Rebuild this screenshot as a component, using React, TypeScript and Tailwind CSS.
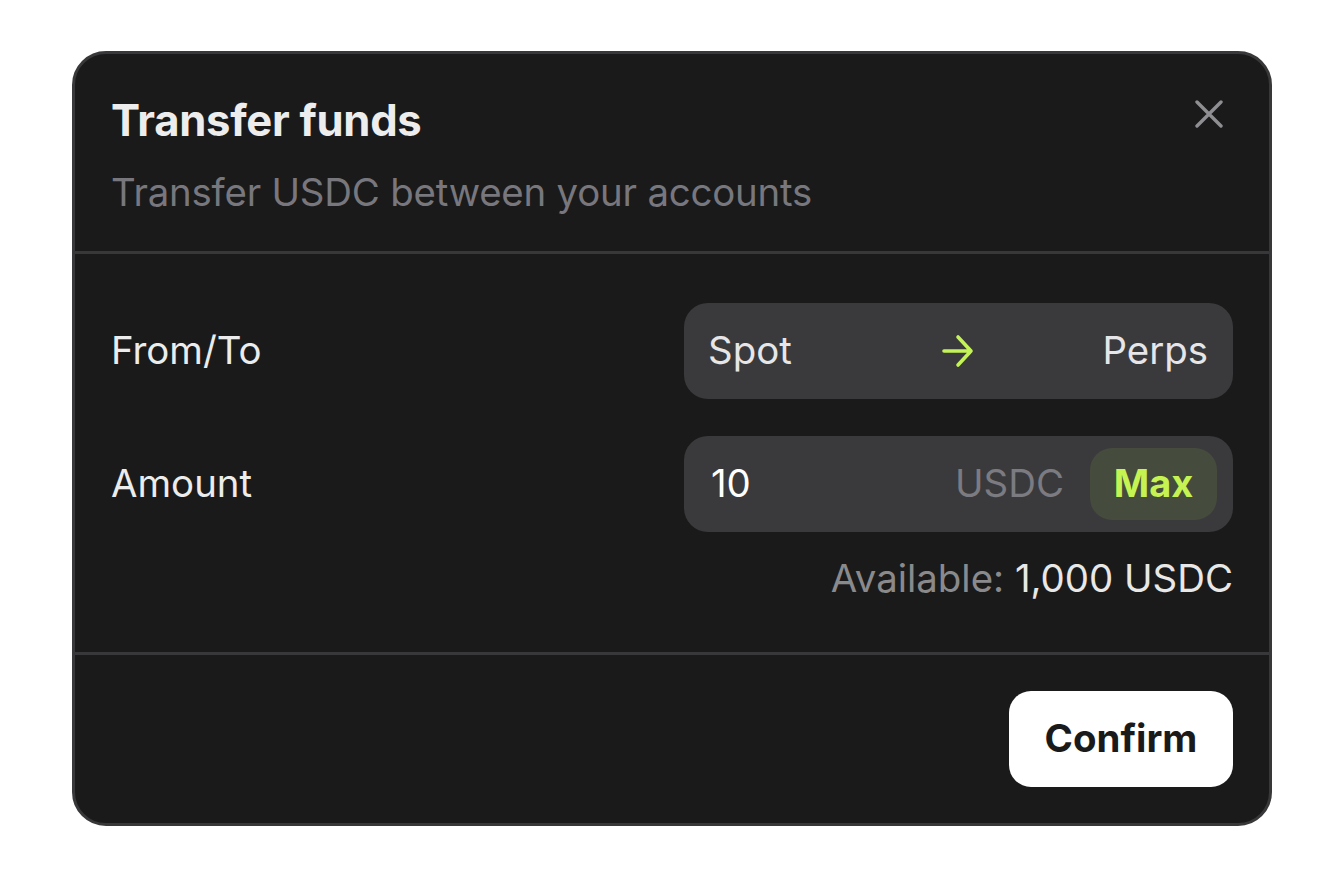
import React from "react";

export default function App() {
  return (
    <div
      className="min-h-screen w-full bg-white flex items-center justify-center"
      style={{ fontFamily: "Inter, 'Noto Sans', sans-serif" }}
    >
      <div className="relative w-[1200px] bg-[#1a1a1a] border-[3px] border-[#38383a] rounded-[34px] overflow-hidden">
        <button className="absolute top-[46px] right-[46px] w-[28px] h-[28px] flex items-center justify-center">
          <svg width="28" height="28" viewBox="0 0 28 28" fill="none">
            <path d="M2 2 L26 26 M26 2 L2 26" stroke="#8e8e93" strokeWidth="3.4" strokeLinecap="round" />
          </svg>
        </button>

        <div className="px-[36px] pt-[38px] pb-[30px] border-b-[3px] border-[#38383a]">
          <h2 className="text-[43.6px] leading-[58px] font-bold text-[#ededed] tracking-[-0.3px]">Transfer funds</h2>
          <p className="mt-[13px] text-[38.4px] leading-[58px] text-[#77777d] tracking-[-0.2px]">Transfer USDC between your accounts</p>
        </div>

        <div className="px-[36px] pt-[49px] pb-[45px] border-b-[3px] border-[#38383a] flex flex-col">
          <div className="flex items-center justify-between">
            <span className="text-[38.4px] text-[#ececec]">From/To</span>
            <div className="w-[549px] h-[96px] rounded-[24px] bg-[#3a3a3c] pl-[24px] pr-[25px] grid grid-cols-3 items-center">
              <span className="justify-self-start text-[38.4px] text-[#e6e6e8]">Spot</span>
              <svg width="34" height="34" viewBox="0 0 34 34" fill="none" className="justify-self-center">
                <path d="M3 17 H30 M17 3 L30 17 L17 31" stroke="#c3f356" strokeWidth="3.6" strokeLinecap="round" strokeLinejoin="round" />
              </svg>
              <span className="justify-self-end text-[38.4px] text-[#e6e6e8]">Perps</span>
            </div>
          </div>

          <div className="mt-[37px] flex items-center justify-between">
            <span className="text-[38.4px] text-[#ececec]">Amount</span>
            <div className="w-[549px] h-[96px] rounded-[24px] bg-[#3a3a3c] pl-[27px] pr-[16px] flex items-center">
              <span className="flex-1 text-[38.4px] text-white">10</span>
              <span className="text-[38.4px] text-[#7b7b81]">USDC</span>
              <span className="ml-[26px] w-[127px] h-[72px] rounded-[22px] bg-[#454b3d] flex items-center justify-center text-[38px] font-bold text-[#c5f452]">
                Max
              </span>
            </div>
          </div>

          <div className="mt-[17px] text-right text-[38.4px] leading-[58px]">
            <span className="text-[#8a8a8c]">Available: </span>
            <span className="text-[#e8e8e8]">1,000 USDC</span>
          </div>
        </div>

        <div className="px-[36px] pt-[36px] pb-[36px] flex justify-end">
          <button className="w-[224px] h-[96px] rounded-[22px] bg-white text-[38.4px] font-bold text-[#1a1a1a]">
            Confirm
          </button>
        </div>
      </div>
    </div>
  );
}
